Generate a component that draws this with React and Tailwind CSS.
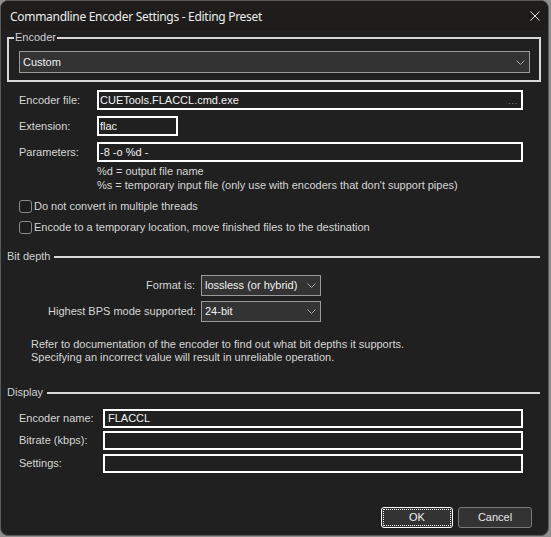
import React from "react";

function Chevron() {
  return (
    <svg width="9" height="5" viewBox="0 0 9 5" className="shrink-0">
      <path d="M0.5 0.5 L4.5 4.5 L8.5 0.5" fill="none" stroke="#a8a8a8" strokeWidth="1" />
    </svg>
  );
}

function Combo({ value, w, h }) {
  return (
    <div
      className={`flex items-center justify-between border border-[#9a9a9a] bg-[#333333] pl-[3px] pr-[4px] text-[#f2f2f2] ${w} ${h}`}
    >
      <span>{value}</span>
      <Chevron />
    </div>
  );
}

function Input({ value, w, h = "h-[20px]", pl = "pl-[1px]", dots }) {
  return (
    <div
      className={`flex items-center justify-between border-2 border-white bg-[#202020] text-[#f2f2f2] ${pl} pr-[3px] ${w} ${h}`}
    >
      <span>{value}</span>
      {dots && <span className="text-[8px] leading-none text-[#c9b4b4] tracking-[1px] mt-[3px]">...</span>}
    </div>
  );
}

function Check({ label, mt }) {
  return (
    <div className={`flex items-center h-[17px] ml-[18px] ${mt}`}>
      <div className="w-[13px] h-[13px] rounded-[3px] border border-[#8a8a8a] bg-[#1d1d1d]" />
      <span className="ml-[2px] text-[#d6d6d6]">{label}</span>
    </div>
  );
}

function GroupLine({ label, mt }) {
  return (
    <div className={`flex items-center h-[13px] ml-[6px] mr-[8px] ${mt}`}>
      <span className="text-[#cfcfcf]">{label}</span>
      <div className="flex-1 h-[2px] bg-[#d8d8d8] ml-[4px] mt-[1px]" />
    </div>
  );
}

export default function App() {
  return (
    <div className="w-[551px] h-[537px] bg-[#8f8f8f] font-['Liberation_Sans',Arial,sans-serif] text-[11px] leading-[13px]">
      <div className="w-[549px] h-[536px] rounded-[8px] border border-[#5a5a5a] bg-[#202020] overflow-hidden flex flex-col">
        {/* Title bar */}
        <div className="h-[30px] shrink-0 bg-[#1e1d1b] flex items-center pl-[9px]">
          <span className="font-['Noto_Sans',sans-serif] text-[12px] tracking-[-0.3px] text-[#ececec]">
            Commandline Encoder Settings - Editing Preset
          </span>
          <svg width="10" height="10" viewBox="0 0 10 10" className="ml-auto mr-[8px]">
            <path d="M0.5 0.5 L9.5 9.5 M9.5 0.5 L0.5 9.5" stroke="#e6e6e6" strokeWidth="1" />
          </svg>
        </div>

        {/* Encoder group */}
        <fieldset className="ml-[6px] w-[534px] border-2 border-[#d8d8d8] pb-[7px]">
          <legend className="ml-[5px] px-[1px] text-[#cfcfcf] leading-[13px]">Encoder</legend>
          <div className="ml-[10px] mt-[7px]">
            <Combo value="Custom" w="w-[511px]" h="h-[22px]" />
          </div>
        </fieldset>

        {/* Encoder file */}
        <div className="flex items-center mt-[8px] ml-[18px]">
          <span className="w-[78px] text-[#d6d6d6]">Encoder file:</span>
          <Input value="CUETools.FLACCL.cmd.exe" w="w-[426px]" dots />
        </div>
        <div className="flex items-center mt-[6px] ml-[18px]">
          <span className="w-[78px] text-[#d6d6d6]">Extension:</span>
          <Input value="flac" w="w-[81px]" />
        </div>
        <div className="flex items-center mt-[6px] ml-[18px]">
          <span className="w-[78px] text-[#d6d6d6]">Parameters:</span>
          <Input value="-8 -o %d -" w="w-[426px]" />
        </div>
        <div className="ml-[96px] mt-[2px] leading-[14px] text-[#d6d6d6]">
          <div>%d = output file name</div>
          <div>%s = temporary input file (only use with encoders that don't support pipes)</div>
        </div>

        <Check label="Do not convert in multiple threads" mt="mt-[6px]" />
        <Check label="Encode to a temporary location, move finished files to the destination" mt="mt-[4px]" />

        <GroupLine label="Bit depth" mt="mt-[14px]" />

        <div className="flex items-center mt-[12px]">
          <span className="w-[200px] pr-[6px] text-right text-[#d6d6d6]">Format is:</span>
          <Combo value="lossless (or hybrid)" w="w-[120px]" h="h-[21px]" />
        </div>
        <div className="flex items-center mt-[5px]">
          <span className="w-[200px] pr-[5px] text-right text-[#d6d6d6]">Highest BPS mode supported:</span>
          <Combo value="24-bit" w="w-[120px]" h="h-[21px]" />
        </div>

        <div className="ml-[30px] mt-[16px] text-[#d6d6d6]">
          <div>Refer to documentation of the encoder to find out what bit depths it supports.</div>
          <div>Specifying an incorrect value will result in unreliable operation.</div>
        </div>

        <GroupLine label="Display" mt="mt-[22px]" />

        <div className="flex items-center mt-[10px] ml-[18px]">
          <span className="w-[84px] text-[#d6d6d6]">Encoder name:</span>
          <Input value="FLACCL" w="w-[420px]" h="h-[19px]" pl="pl-[3px]" />
        </div>
        <div className="flex items-center mt-[3px] ml-[18px]">
          <span className="w-[84px] text-[#d6d6d6]">Bitrate (kbps):</span>
          <Input value="" w="w-[420px]" h="h-[19px]" />
        </div>
        <div className="flex items-center mt-[4px] ml-[18px]">
          <span className="w-[84px] text-[#d6d6d6]">Settings:</span>
          <Input value="" w="w-[420px]" h="h-[19px]" />
        </div>

        <div className="flex justify-end mt-[34px] mr-[16px] gap-[5px]">
          <button className="w-[72px] h-[21px] rounded-[3px] border border-white bg-[#333333] text-[#f0f0f0] outline-1 outline-dotted outline-white outline-offset-[-3px]">
            OK
          </button>
          <button className="w-[74px] h-[21px] rounded-[3px] border border-[#7a7a7a] bg-[#333333] text-[#e6e6e6]">
            Cancel
          </button>
        </div>
      </div>
    </div>
  );
}
